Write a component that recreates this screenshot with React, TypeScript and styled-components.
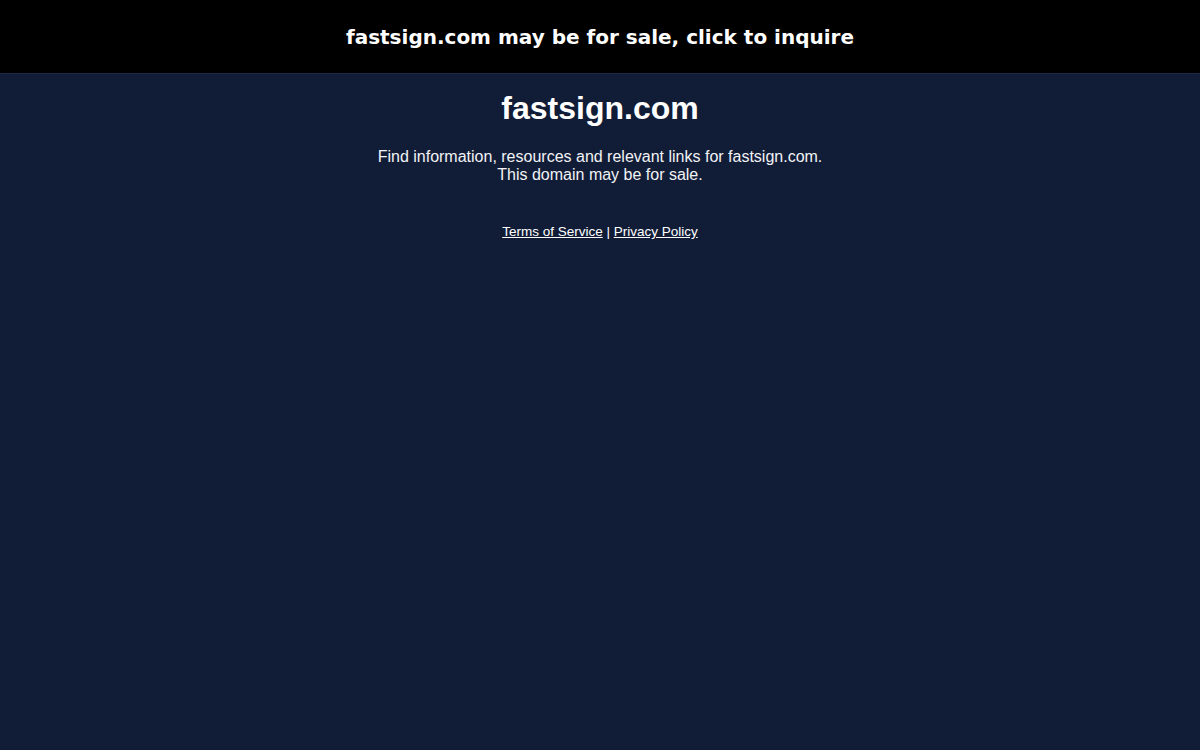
import React from "react";
import styled, { createGlobalStyle } from "styled-components";

const Global = createGlobalStyle`
  html, body { margin: 0; padding: 0; background: #111c37; }
  body { font-family: "Liberation Sans", Arial, sans-serif; }
`;

const Page = styled.div`
  min-height: 750px;
  background: #111c37;
  color: #ffffff;
`;

const Banner = styled.a`
  display: flex;
  align-items: center;
  justify-content: center;
  height: 73px;
  background: #000000;
  border-bottom: 1px solid #1e2943;
  color: #ffffff;
  font-family: "DejaVu Sans", sans-serif;
  font-weight: bold;
  font-size: 20px;
  text-decoration: none;
`;

const Content = styled.main`
  display: flex;
  flex-direction: column;
  align-items: center;
  text-align: center;
`;

const Title = styled.h1`
  margin: 16px 0 0;
  font-size: 32px;
  line-height: 37px;
  font-weight: bold;
`;

const Intro = styled.p`
  margin: 21px 0 0;
  font-size: 16px;
  line-height: 18px;
  color: #f2f3f5;
`;

const Links = styled.div`
  margin-top: 40px;
  font-size: 13.5px;
  line-height: 16px;
  color: #ffffff;
`;

const Link = styled.a`
  color: #ffffff;
  text-decoration: underline;
`;

export default function App() {
  return (
    <>
      <Global />
      <Page>
        <Banner href="#">fastsign.com may be for sale, click to inquire</Banner>
        <Content>
          <Title>fastsign.com</Title>
          <Intro>
            Find information, resources and relevant links for fastsign.com.
            <br />
            This domain may be for sale.
          </Intro>
          <Links>
            <Link href="#">Terms of Service</Link> | <Link href="#">Privacy Policy</Link>
          </Links>
        </Content>
      </Page>
    </>
  );
}
